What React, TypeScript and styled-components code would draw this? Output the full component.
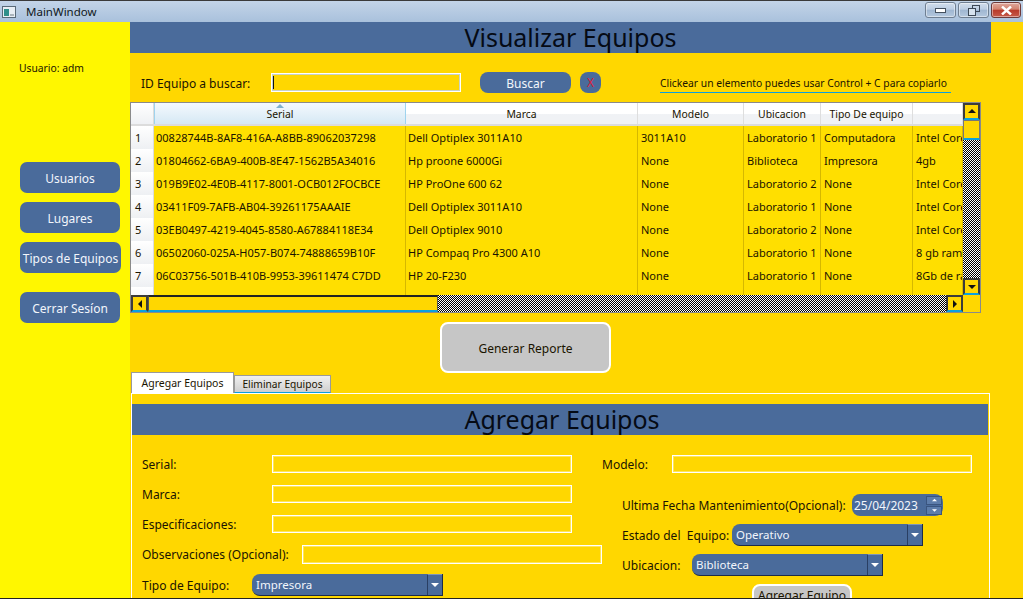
import React from "react"
import styled, { createGlobalStyle } from "styled-components"

const Global = createGlobalStyle`
    html, body {
        margin: 0;
        padding: 0;
        width: 1023px;
        height: 599px;
        overflow: hidden;
        background: #ffd700;
        font-family: "Noto Sans", "DejaVu Sans", sans-serif;
    }
    * { box-sizing: border-box; }
`

const blue = "#4a6b9b"
const text = "#1a1400"

const Window = styled.div`
    width: 1023px;
    height: 599px;
    display: flex;
    flex-direction: column;
    overflow: hidden;
    border-top: 1px solid #3a3a3a;
    border-bottom: 1px solid #222;
    font-size: 12px;
    color: ${text};
`
const TitleBar = styled.div`
    height: 21px;
    flex-shrink: 0;
    display: flex;
    align-items: center;
    padding: 0 2px 0 2px;
    background: linear-gradient(#c3d4e8, #a9c1dc);
    color: #101820;
`
const AppIcon = styled.svg`
    width: 14px;
    height: 14px;
    margin-right: 10px;
`
const Caption = styled.span`
    flex: 1;
    font-size: 11.5px;
`
const WinButton = styled.div<{ $close?: boolean }>`
    height: 16px;
    width: ${(p) => (p.$close ? 30 : 31)}px;
    margin-left: 2px;
    margin-top: -3px;
    border: 1px solid ${(p) => (p.$close ? "#6e3a3a" : "#6f7f92")};
    border-radius: 3px;
    display: flex;
    align-items: center;
    justify-content: center;
    background: ${(p) => p.$close
        ? "linear-gradient(#dfa79c 0, #d2826f 45%, #b8392a 50%, #c65a4a 100%)"
        : "linear-gradient(#d2deec 0, #bccde2 45%, #9fb6d1 50%, #b4c8de 100%)"};
    box-shadow: inset 0 0 0 1px rgba(255,255,255,.45);
`
const Body = styled.div`
    flex: 1;
    display: flex;
    min-height: 0;
`
const Sidebar = styled.div`
    width: 130px;
    flex-shrink: 0;
    background: #fff700;
    padding: 38px 0 0 20px;
    display: flex;
    flex-direction: column;
`
const UserLabel = styled.div`
    font-size: 10.3px;
    line-height: 16px;
    margin: 0 0 86px -1px;
`
const SideButton = styled.div<{ $gap?: number; $wide?: boolean }>`
    width: ${(p) => (p.$wide ? 101 : 100)}px;
    height: 31px;
    margin-bottom: ${(p) => p.$gap ?? 9}px;
    padding-top: 1px;
    border-radius: 7px;
    background: ${blue};
    color: #f2f6fb;
    font-size: 12px;
    display: flex;
    align-items: center;
    justify-content: center;
    white-space: nowrap;
`
const Main = styled.div`
    flex: 1;
    min-width: 0;
    background: #ffd700;
    display: flex;
    flex-direction: column;
`
const Banner = styled.div<{ $inset?: number }>`
    width: 861px;
    height: 31px;
    flex-shrink: 0;
    padding-left: ${(p) => p.$inset ?? 20}px;
    background: ${blue};
    color: #050a14;
    font-size: 25px;
    line-height: 31px;
    text-align: center;
`
const SearchRow = styled.div`
    height: 21px;
    margin-top: 19px;
    display: flex;
    align-items: center;
    padding-left: 11px;
    flex-shrink: 0;
`
const SearchLabel = styled.span`
    width: 130px;
    padding-top: 1px;
    font-size: 12px;
`
const SearchInput = styled.div`
    width: 190px;
    height: 19px;
    margin-right: 19px;
    border: 1px solid #fff;
    box-shadow: inset 0 0 0 1px #c8d2c8;
    padding: 2px 1px;
`
const Caret = styled.div`
    width: 1px;
    height: 13px;
    background: #111;
`
const PillButton = styled.div`
    width: 91px;
    height: 21px;
    margin-right: 9px;
    padding-top: 1px;
    border-radius: 8px;
    background: ${blue};
    color: #f2f6fb;
    display: flex;
    align-items: center;
    justify-content: center;
`
const ClearButton = styled.div`
    width: 21px;
    height: 21px;
    margin-right: 59px;
    border-radius: 8px;
    background: ${blue};
    color: #d8203a;
    display: flex;
    align-items: center;
    justify-content: center;
`
const Hint = styled.div`
    width: 291px;
    height: 20px;
    font-size: 10.3px;
    line-height: 21px;
    white-space: nowrap;
    border-bottom: 1px solid #0aa0e0;
    margin-top: 1px;
`
const TableFrame = styled.div`
    width: 851px;
    height: 211px;
    margin-top: 9px;
    flex-shrink: 0;
    border: 1px solid #8a8a8a;
    display: grid;
    grid-template-columns: 832px 17px;
    grid-template-rows: 192px 17px;
    background: #ffd700;
`
const Viewport = styled.div`
    overflow: hidden;
    background: #ffdf00;
`
const Row = styled.div`
    display: grid;
    grid-template-columns: 23px 252px 232px 106px 77px 92px 50px;
    height: 23px;
    overflow: hidden;
`
const HeaderRow = styled(Row)`
    height: 23px;
    background: linear-gradient(#ffffff 0, #ffffff 50%, #f0f2f5 55%, #f0f2f5 100%);
    border-bottom: 2px solid #dcdcdc;
`
const HeadCell = styled.div<{ $active?: boolean }>`
    position: relative;
    font-size: 10.4px;
    line-height: 23px;
    text-align: center;
    border-right: 1px solid #dedede;
    ${(p) => p.$active && `
        background: linear-gradient(#f4f9fd, #d3e7f4);
        border: 1px solid #9fd3ee;
        border-top: none;
        border-bottom: none;
    `}
`
const SortArrow = styled.svg`
    position: absolute;
    left: 50%;
    top: 1px;
    margin-left: -4px;
    width: 8px;
    height: 4px;
`
const RowNumber = styled.div`
    background: linear-gradient(#fff, #eef0f3);
    border-bottom: 1px solid #dcdcdc;
    border-right: 1px solid #dcdcdc;
    font-size: 11px;
    line-height: 23px;
    padding-left: 4px;
`
const Cell = styled.div`
    font-size: 11px;
    line-height: 23px;
    padding-left: 2px;
    white-space: nowrap;
    overflow: hidden;
    border-right: 1px solid #d6b800;
    border-bottom: 1px solid #d6b800;

    &:nth-child(n+4) {
        padding-left: 3px;
    }
`
const checker = `
    background-color: #fff;
    background-image: linear-gradient(90deg, #fff 1px, #000 1px), linear-gradient(#fff 1px, #000 1px);
    background-size: 2px 2px;
    background-blend-mode: difference;
`
const VTrack = styled.div`
    ${checker}
    display: flex;
    flex-direction: column;
`
const HTrack = styled.div`
    ${checker}
    display: flex;
    align-items: stretch;
`
const ScrollButton = styled.div`
    width: 17px;
    height: 17px;
    flex-shrink: 0;
    background: #ffd700;
    border: 2px solid #3c3c3c;
    border-bottom-color: #0aa0e0;
    display: flex;
    align-items: center;
    justify-content: center;
`
const HThumb = styled.div`
    flex: 0 0 290px;
    height: 17px;
    background: #ffd700;
    border: 1px solid #555;
    border-top: 2px solid #222;
    border-bottom: 2px solid #0aa0e0;
`
const VThumb = styled.div`
    width: 17px;
    height: 20px;
    flex-shrink: 0;
    background: #ffd700;
    border: 1px solid #777;
    border-bottom: 2px solid #0aa0e0;
`
const Spacer = styled.div`
    flex: 1;
`
const Corner = styled.div`
    background: #ffd700;
`
const ReportButton = styled.div`
    width: 171px;
    height: 51px;
    margin: 9px 0 0 310px;
    padding-top: 1px;
    flex-shrink: 0;
    border: 2px solid #fff;
    border-radius: 8px;
    background: #c6c6c6;
    display: flex;
    align-items: center;
    justify-content: center;
`
const Tabs = styled.div`
    display: flex;
    align-items: flex-end;
    height: 21px;
    margin-top: -1px;
    flex-shrink: 0;
    padding-left: 1px;
`
const Tab = styled.div<{ $active?: boolean }>`
    height: ${(p) => (p.$active ? 21 : 18)}px;
    width: ${(p) => (p.$active ? 103 : 97)}px;
    font-size: ${(p) => (p.$active ? 10.5 : 10.2)}px;
    display: flex;
    align-items: center;
    justify-content: center;
    white-space: nowrap;
    border: 1px solid #9a9a9a;
    border-bottom: ${(p) => (p.$active ? "none" : "1px solid #0aa0e0")};
    background: ${(p) => (p.$active ? "#fff" : "linear-gradient(#f0f0f0, #cfcfcf)")};
`
const Pane = styled.div`
    flex: 1;
    width: 859px;
    margin-left: 1px;
    border: 1px solid #fff;
    border-bottom: none;
    padding: 10px 0 0;
    min-height: 0;
    overflow: hidden;
`
const PaneBanner = styled(Banner)`
    width: 856px;
`
const FormGrid = styled.div`
    display: grid;
    grid-template-columns: 460px 1fr;
    padding: 20px 0 0 10px;
`
const Column = styled.div`
    display: flex;
    flex-direction: column;
`
const Field = styled.div<{ $height: number; $gap?: number; $indent?: number }>`
    display: flex;
    align-items: center;
    height: ${(p) => p.$height}px;
    margin-bottom: ${(p) => p.$gap ?? 0}px;
    margin-left: ${(p) => p.$indent ?? 0}px;
`
const FieldLabel = styled.span<{ $width: number }>`
    width: ${(p) => p.$width}px;
    flex-shrink: 0;
    white-space: nowrap;
    font-size: 12px;
`
const TextBox = styled.div`
    width: 300px;
    height: 100%;
    border: 1px solid #fff;
    box-shadow: inset 0 0 0 1px rgba(255, 255, 255, .35);
`
const Combo = styled.div`
    width: 191px;
    height: 22px;
    font-size: 11.5px;
    border-radius: 8px 0 0 8px;
    background: ${blue};
    color: #f2f6fb;
    display: flex;
    align-items: center;
    justify-content: space-between;
    padding-left: 4px;
    border-right: 1px solid #1c2c48;
    border-bottom: 1px solid #1c2c48;
`
const ComboArrow = styled.div`
    width: 15px;
    height: 21px;
    background: ${blue};
    border-left: 1px solid #2a3f63;
    border-top: 1px solid #7c95bb;
    display: flex;
    align-items: center;
    justify-content: center;
`
const DateBox = styled.div`
    width: 91px;
    height: 22px;
    border-radius: 8px;
    background: ${blue};
    color: #f2f6fb;
    display: flex;
    align-items: center;
    justify-content: space-between;
    padding: 0 1px 0 2px;
`
const Spinner = styled.div`
    width: 16px;
    display: flex;
    flex-direction: column;
    gap: 1px;
`
const SpinPart = styled.div`
    height: 9px;
    background: #5d7dab;
    border: 1px solid #3a557f;
    display: flex;
    align-items: center;
    justify-content: center;
`
const AddButton = styled.div`
    width: 100px;
    height: 30px;
    margin-left: 150px;
    border: 2px solid #fff;
    border-radius: 8px;
    background: #c6c6c6;
    text-align: center;
    line-height: 19px;
    white-space: nowrap;
`

const Triangle = ({ dir, size = 6, color = "#fff" }: { dir: "up" | "down" | "left" | "right"; size?: number; color?: string }) => {
    const points = {
        up: "0,5 8,5 4,1",
        down: "0,2 8,2 4,6",
        left: "6,0 6,8 2,4",
        right: "2,0 2,8 6,4",
    }[dir]
    return (
        <svg width={size} height={size} viewBox="0 0 8 8">
            <polygon points={points} fill={color} />
        </svg>
    )
}

const headers = ["Serial", "Marca", "Modelo", "Ubicacion", "Tipo De equipo", ""]

const rows = [
    ["00828744B-8AF8-416A-A8BB-89062037298", "Dell Optiplex 3011A10", "3011A10", "Laboratorio 1", "Computadora", "Intel Core i5"],
    ["01804662-6BA9-400B-8E47-1562B5A34016", "Hp proone 6000Gi", "None", "Biblioteca", "Impresora", "4gb"],
    ["019B9E02-4E0B-4117-8001-OCB012FOCBCE", "HP ProOne 600 62", "None", "Laboratorio 2", "None", "Intel Core i5"],
    ["03411F09-7AFB-AB04-39261175AAAIE", "Dell Optiplex 3011A10", "None", "Laboratorio 1", "None", "Intel Core i5"],
    ["03EB0497-4219-4045-8580-A67884118E34", "Dell Optiplex 9010", "None", "Laboratorio 2", "None", "Intel Core i5"],
    ["06502060-025A-H057-B074-74888659B10F", "HP Compaq Pro 4300 A10", "None", "Laboratorio 1", "None", "8 gb ram"],
    ["06C03756-501B-410B-9953-39611474 C7DD", "HP 20-F230", "None", "Laboratorio 1", "None", "8Gb de ram"],
    ["1A7F2013-7A0B-4D62-A1C8-9B3F7C1D2E40", "Dell Optiplex 3011A10", "None", "Laboratorio 1", "None", "Intel Core i5"],
]

export default function App() {
    return (
        <>
            <Global />
            <Window>
                <TitleBar>
                    <AppIcon viewBox="0 0 14 14">
                        <rect x="0.5" y="1.5" width="13" height="11" fill="#e8eef4" stroke="#5a6a78" />
                        <rect x="2" y="4" width="5" height="7" fill="#2f8f8a" />
                        <rect x="8" y="9" width="4" height="2" fill="#aab4bc" />
                    </AppIcon>
                    <Caption>MainWindow</Caption>
                    <WinButton>
                        <svg width="11" height="5" viewBox="0 0 11 5"><rect x="0.5" y="0.5" width="10" height="4" fill="#fff" stroke="#44505e" /></svg>
                    </WinButton>
                    <WinButton>
                        <svg width="12" height="11" viewBox="0 0 12 11">
                            <rect x="4.5" y="0.5" width="7" height="6" fill="none" stroke="#3c4856" />
                            <rect x="0.5" y="3.5" width="7" height="7" fill="#d6e2ee" stroke="#3c4856" />
                        </svg>
                    </WinButton>
                    <WinButton $close>
                        <svg width="11" height="9" viewBox="0 0 11 9">
                            <path d="M1 0.5 L10 8.5 M10 0.5 L1 8.5" stroke="#fff" strokeWidth="2.4" />
                        </svg>
                    </WinButton>
                </TitleBar>
                <Body>
                    <Sidebar>
                        <UserLabel>Usuario: adm</UserLabel>
                        <SideButton>Usuarios</SideButton>
                        <SideButton>Lugares</SideButton>
                        <SideButton $wide $gap={19}>Tipos de Equipos</SideButton>
                        <SideButton>Cerrar Sesíon</SideButton>
                    </Sidebar>
                    <Main>
                        <Banner>Visualizar Equipos</Banner>
                        <SearchRow>
                            <SearchLabel>ID Equipo a buscar:</SearchLabel>
                            <SearchInput><Caret /></SearchInput>
                            <PillButton>Buscar</PillButton>
                            <ClearButton>X</ClearButton>
                            <Hint>Clickear un elemento puedes usar Control + C para copiarlo</Hint>
                        </SearchRow>
                        <TableFrame>
                            <Viewport>
                                <HeaderRow>
                                    <RowNumber />
                                    {headers.map((h, i) => (
                                        <HeadCell key={i} $active={i === 0}>
                                            {i === 0 && (
                                                <SortArrow viewBox="0 0 8 4"><polygon points="0,4 8,4 4,0" fill="#7fb0cc" /></SortArrow>
                                            )}
                                            {h}
                                        </HeadCell>
                                    ))}
                                </HeaderRow>
                                {rows.map((r, i) => (
                                    <Row key={i}>
                                        <RowNumber>{i + 1}</RowNumber>
                                        {r.map((c, j) => <Cell key={j}>{c}</Cell>)}
                                    </Row>
                                ))}
                            </Viewport>
                            <VTrack>
                                <ScrollButton><Triangle dir="up" size={8} color="#111" /></ScrollButton>
                                <VThumb />
                                <Spacer />
                                <ScrollButton><Triangle dir="down" size={8} color="#111" /></ScrollButton>
                            </VTrack>
                            <HTrack>
                                <ScrollButton><Triangle dir="left" size={8} color="#111" /></ScrollButton>
                                <HThumb />
                                <Spacer />
                                <ScrollButton><Triangle dir="right" size={8} color="#111" /></ScrollButton>
                            </HTrack>
                            <Corner />
                        </TableFrame>
                        <ReportButton>Generar Reporte</ReportButton>
                        <Tabs>
                            <Tab $active>Agregar Equipos</Tab>
                            <Tab>Eliminar Equipos</Tab>
                        </Tabs>
                        <Pane>
                            <PaneBanner $inset={4}>Agregar Equipos</PaneBanner>
                            <FormGrid>
                                <Column>
                                    <Field $height={18} $gap={12}>
                                        <FieldLabel $width={130}>Serial:</FieldLabel>
                                        <TextBox />
                                    </Field>
                                    <Field $height={18} $gap={12}>
                                        <FieldLabel $width={130}>Marca:</FieldLabel>
                                        <TextBox />
                                    </Field>
                                    <Field $height={18} $gap={12}>
                                        <FieldLabel $width={130}>Especificaciones:</FieldLabel>
                                        <TextBox />
                                    </Field>
                                    <Field $height={19} $gap={10}>
                                        <FieldLabel $width={160}>Observaciones (Opcional):</FieldLabel>
                                        <TextBox />
                                    </Field>
                                    <Field $height={22}>
                                        <FieldLabel $width={110}>Tipo de Equipo:</FieldLabel>
                                        <Combo>Impresora<ComboArrow><Triangle dir="down" size={8} /></ComboArrow></Combo>
                                    </Field>
                                </Column>
                                <Column>
                                    <Field $height={18} $gap={21}>
                                        <FieldLabel $width={70}>Modelo:</FieldLabel>
                                        <TextBox />
                                    </Field>
                                    <Field $height={22} $gap={8} $indent={20}>
                                        <FieldLabel $width={230}>Ultima Fecha Mantenimiento(Opcional):</FieldLabel>
                                        <DateBox>
                                            25/04/2023
                                            <Spinner>
                                                <SpinPart><Triangle dir="up" size={5} /></SpinPart>
                                                <SpinPart><Triangle dir="down" size={5} /></SpinPart>
                                            </Spinner>
                                        </DateBox>
                                    </Field>
                                    <Field $height={22} $gap={8} $indent={20}>
                                        <FieldLabel $width={110}>Estado del&nbsp; Equipo:</FieldLabel>
                                        <Combo>Operativo<ComboArrow><Triangle dir="down" size={8} /></ComboArrow></Combo>
                                    </Field>
                                    <Field $height={22} $gap={8} $indent={20}>
                                        <FieldLabel $width={70}>Ubicacion:</FieldLabel>
                                        <Combo>Biblioteca<ComboArrow><Triangle dir="down" size={8} /></ComboArrow></Combo>
                                    </Field>
                                    <AddButton>Agregar Equipo</AddButton>
                                </Column>
                            </FormGrid>
                        </Pane>
                    </Main>
                </Body>
            </Window>
        </>
    )
}
